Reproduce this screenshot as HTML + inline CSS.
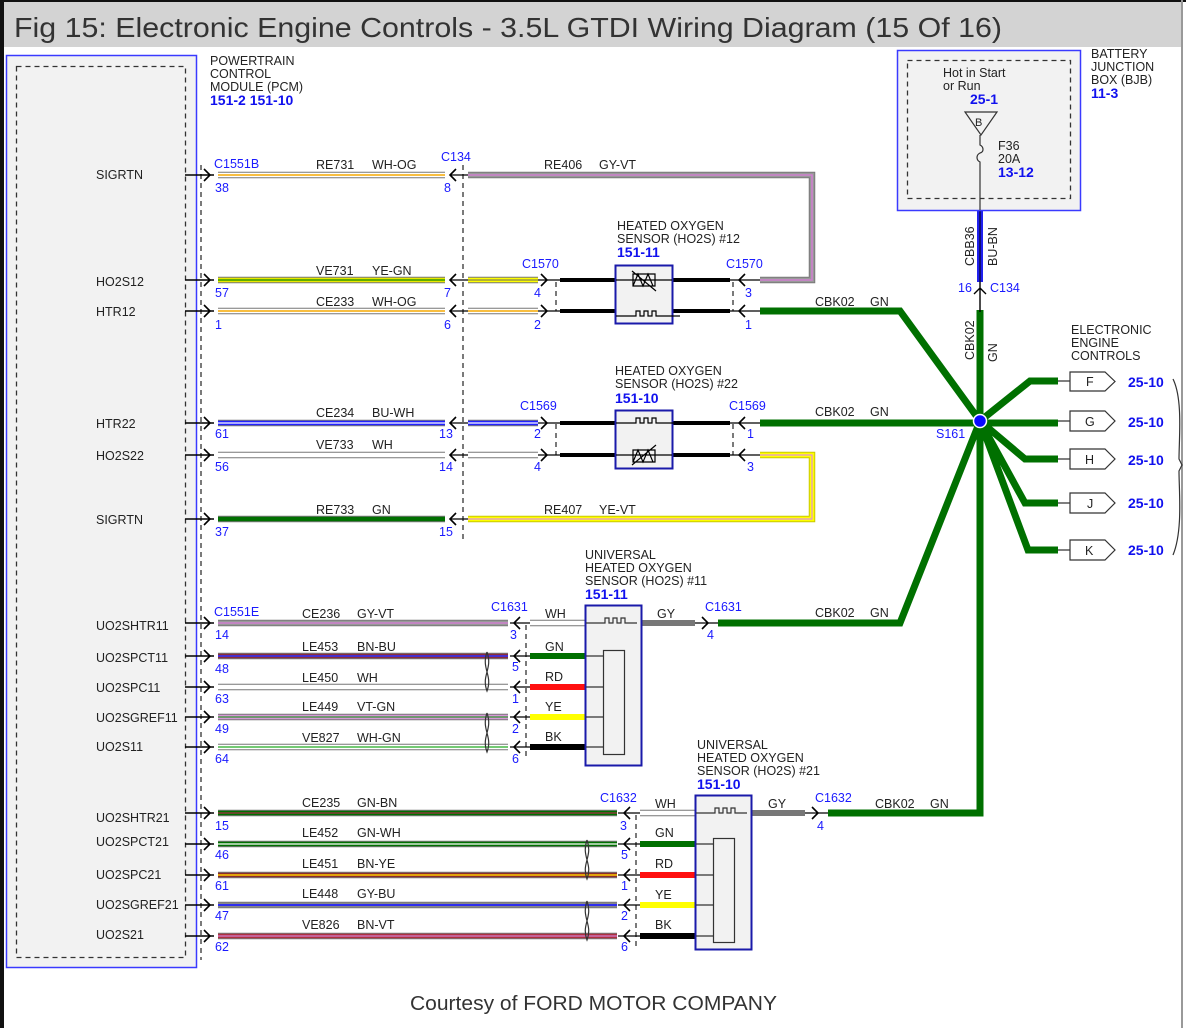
<!DOCTYPE html>
<html><head><meta charset="utf-8"><style>
html,body{margin:0;padding:0;background:#fff}
svg{display:block}
path,polyline,line{fill:none}
text{font-family:"Liberation Sans",sans-serif;font-size:12.5px;fill:#222}
.b{fill:#1a1aff}
.bb{fill:#1010ee;font-weight:bold;font-size:14px}
.ch{stroke:#000;stroke-width:1.6}
.dash{stroke:#333;stroke-width:1.3;stroke-dasharray:5,4}
.o{stroke:#777;stroke-width:6.5}
.k{stroke:#000;stroke-width:4}
.g{stroke:#007000;stroke-width:7;stroke-linejoin:miter}
</style></head><body>
<svg width="1186" height="1028" viewBox="0 0 1186 1028" xmlns="http://www.w3.org/2000/svg">
<rect x="0" y="0" width="1186" height="1028" fill="#fff"/>
<rect x="2" y="2" width="1180" height="45" fill="#d3d3d3"/>
<rect x="0" y="0" width="4" height="1028" fill="#111"/>
<rect x="0" y="0" width="1186" height="2" fill="#111"/>
<rect x="1181" y="0" width="2" height="1028" fill="#999"/>
<text x="14" y="37" textLength="988" lengthAdjust="spacingAndGlyphs" style="font-size:28px;fill:#333">Fig 15: Electronic Engine Controls - 3.5L GTDI Wiring Diagram (15 Of 16)</text>

<!-- PCM -->
<rect x="6.5" y="55.5" width="190" height="912" fill="#f2f2f2" stroke="#3a3aff" stroke-width="1.5"/>
<rect x="16.5" y="66.5" width="169" height="891" fill="none" class="dash"/>
<text x="210" y="65">POWERTRAIN</text><text x="210" y="78">CONTROL</text><text x="210" y="91">MODULE (PCM)</text>
<text x="210" y="105" class="bb">151-2  151-10</text>
<g>
<text x="96" y="179">SIGRTN</text><text x="96" y="286">HO2S12</text><text x="96" y="316">HTR12</text>
<text x="96" y="428">HTR22</text><text x="96" y="460">HO2S22</text><text x="96" y="524">SIGRTN</text>
<text x="96" y="630">UO2SHTR11</text><text x="96" y="662">UO2SPCT11</text><text x="96" y="692">UO2SPC11</text>
<text x="96" y="722">UO2SGREF11</text><text x="96" y="751">UO2S11</text>
<text x="96" y="822">UO2SHTR21</text><text x="96" y="846">UO2SPCT21</text><text x="96" y="879">UO2SPC21</text>
<text x="96" y="909">UO2SGREF21</text><text x="96" y="939">UO2S21</text>
</g>
<!-- dashed connectors -->
<line x1="201" y1="165" x2="201" y2="960" class="dash"/>
<line x1="463" y1="165" x2="463" y2="540" class="dash"/>
<line x1="556" y1="282" x2="556" y2="311" class="dash"/>
<line x1="733" y1="282" x2="733" y2="311" class="dash"/>
<line x1="556" y1="424" x2="556" y2="455" class="dash"/>
<line x1="733" y1="424" x2="733" y2="455" class="dash"/>
<line x1="526" y1="625" x2="526" y2="760" class="dash"/>
<line x1="636" y1="815" x2="636" y2="950" class="dash"/>

<!-- left stubs and chevrons -->
<g stroke="#000" stroke-width="1.4">
<path d="M185 175H214M185 280H214M185 311H214M185 423H214M185 455H214M185 519H214M185 623H214M185 656H214M185 687H214M185 717H214M185 747H214M185 813H214M185 844H214M185 875H214M185 905H214M185 936H214"/>
</g>
<g class="ch">
<path d="M204 169l6 6-6 6M204 274l6 6-6 6M204 305l6 6-6 6M204 417l6 6-6 6M204 449l6 6-6 6M204 513l6 6-6 6M204 617l6 6-6 6M204 650l6 6-6 6M204 681l6 6-6 6M204 711l6 6-6 6M204 741l6 6-6 6M204 807l6 6-6 6M204 838l6 6-6 6M204 869l6 6-6 6M204 899l6 6-6 6M204 930l6 6-6 6"/>
<path d="M456 169l-6 6 6 6M456 274l-6 6 6 6M456 305l-6 6 6 6M456 417l-6 6 6 6M456 449l-6 6 6 6M456 513l-6 6 6 6"/>
<path d="M541 274l6 6-6 6M541 305l6 6-6 6M541 417l6 6-6 6M541 449l6 6-6 6"/>
<path d="M745 274l-6 6 6 6M745 305l-6 6 6 6M745 417l-6 6 6 6M745 449l-6 6 6 6"/>
<path d="M520 617l-6 6 6 6M520 650l-6 6 6 6M520 681l-6 6 6 6M520 711l-6 6 6 6M520 741l-6 6 6 6"/>
<path d="M630 807l-6 6 6 6M630 838l-6 6 6 6M630 869l-6 6 6 6M630 899l-6 6 6 6M630 930l-6 6 6 6"/>
<path d="M702 617l6 6-6 6M812 807l6 6-6 6"/>
</g>
<g stroke="#000" stroke-width="1.2">
<path d="M450 175H468M450 280H468M450 311H468M450 423H468M450 455H468M450 519H468M538 280H560M538 311H560M538 423H560M538 455H560M730 280H760M730 311H760M730 423H760M730 455H760M510 623H530M510 656H530M510 687H530M510 717H530M510 747H530M618 813H640M618 844H640M618 875H640M618 905H640M618 936H640M695 623H718M805 813H828"/>
</g>

<!-- wires PCM to C134 -->
<path class="o" d="M218 175H445M218 280H445M218 311H445M218 423H445M218 455H445M218 519H445"/>
<path stroke="#fff" stroke-width="4.5" d="M218 175H445M218 311H445M218 455H445"/>
<path stroke="#f5a800" stroke-width="1.6" d="M218 175H445M218 311H445"/>
<path stroke="#e8e800" stroke-width="4.5" d="M218 280H445"/><path stroke="#339900" stroke-width="1.6" d="M218 280H445"/>
<path stroke="#2222ff" stroke-width="4.5" d="M218 423H445"/><path stroke="#fff" stroke-width="1.2" d="M218 423H445"/>
<path stroke="#007000" stroke-width="4.5" d="M218 519H445"/>

<!-- right of C134 -->
<path class="o" d="M468 175H812V280H760"/><path stroke="#999" stroke-width="4.5" d="M468 175H812V280H760"/><path stroke="#d080d0" stroke-width="1.6" d="M468 175H812V280H760"/>
<path class="o" d="M468 280H538M468 311H538M468 423H538M468 455H538"/>
<path stroke="#ffff00" stroke-width="4.5" d="M468 280H538"/><path stroke="#666" stroke-width="1" d="M468 280H538"/>
<path stroke="#fff" stroke-width="4.5" d="M468 311H538M468 455H538"/><path stroke="#f5a800" stroke-width="1.4" d="M468 311H538"/>
<path stroke="#2222ff" stroke-width="4.5" d="M468 423H538"/><path stroke="#fff" stroke-width="1.2" d="M468 423H538"/>
<path stroke="#c8c800" stroke-width="6.5" d="M468 519H812V455H760"/><path stroke="#ffff00" stroke-width="4.5" d="M468 519H812V455H760"/><path stroke="#e090e0" stroke-width="1.2" d="M468 519H812V455H760"/>
<path class="k" d="M560 280H730M560 311H730M560 423H730M560 455H730"/>

<!-- Sensor 12 -->
<text x="617" y="230">HEATED OXYGEN</text><text x="617" y="243">SENSOR (HO2S) #12</text><text x="617" y="257" class="bb">151-11</text>
<rect x="615.5" y="265.5" width="57" height="58" fill="#f2f2f2" stroke="#1a1aaa" stroke-width="2"/>
<path stroke="#000" stroke-width="1.2" d="M616 280H672M616 316H632h4v-5h4v5h4v-5h4v5h4v-5h4v5h24M633 274h22v12h-22zM633 286l5-12 5 12 5-12 5 12M632 271l24 20"/>
<!-- Sensor 22 -->
<text x="615" y="375">HEATED OXYGEN</text><text x="615" y="388">SENSOR (HO2S) #22</text><text x="615" y="403" class="bb">151-10</text>
<rect x="615.5" y="410.5" width="57" height="58" fill="#f2f2f2" stroke="#1a1aaa" stroke-width="2"/>
<path stroke="#000" stroke-width="1.2" d="M616 455H672M616 423H632h4v-5h4v5h4v-5h4v5h4v-5h4v5h24M633 450h22v12h-22zM633 462l5-12 5 12 5-12 5 12M632 465l24-20"/>

<!-- upper texts -->
<text x="214" y="168" class="b">C1551B</text><text x="215" y="192" class="b">38</text>
<text x="316" y="169">RE731</text><text x="372" y="169">WH-OG</text>
<text x="441" y="161" class="b">C134</text><text x="444" y="192" class="b">8</text>
<text x="544" y="169">RE406</text><text x="599" y="169">GY-VT</text>
<text x="316" y="275">VE731</text><text x="372" y="275">YE-GN</text>
<text x="215" y="297" class="b">57</text><text x="444" y="297" class="b">7</text>
<text x="522" y="268" class="b">C1570</text><text x="534" y="297" class="b">4</text>
<text x="726" y="268" class="b">C1570</text><text x="745" y="297" class="b">3</text>
<text x="316" y="306">CE233</text><text x="372" y="306">WH-OG</text>
<text x="215" y="329" class="b">1</text><text x="444" y="329" class="b">6</text>
<text x="534" y="329" class="b">2</text><text x="745" y="329" class="b">1</text>
<text x="815" y="306">CBK02</text><text x="870" y="306">GN</text>
<text x="316" y="417">CE234</text><text x="372" y="417">BU-WH</text>
<text x="215" y="438" class="b">61</text><text x="439" y="438" class="b">13</text>
<text x="520" y="410" class="b">C1569</text><text x="534" y="438" class="b">2</text>
<text x="729" y="410" class="b">C1569</text><text x="747" y="438" class="b">1</text>
<text x="815" y="416">CBK02</text><text x="870" y="416">GN</text>
<text x="316" y="449">VE733</text><text x="372" y="449">WH</text>
<text x="215" y="471" class="b">56</text><text x="439" y="471" class="b">14</text>
<text x="534" y="471" class="b">4</text><text x="747" y="471" class="b">3</text>
<text x="316" y="514">RE733</text><text x="372" y="514">GN</text>
<text x="544" y="514">RE407</text><text x="599" y="514">YE-VT</text>
<text x="215" y="536" class="b">37</text><text x="439" y="536" class="b">15</text>
<text x="936" y="438" class="b">S161</text>

<!-- middle group -->
<path class="o" d="M218 623H508M218 656H508M218 687H508M218 717H508M218 747H508"/>
<path stroke="#999" stroke-width="4.5" d="M218 623H508"/><path stroke="#d080d0" stroke-width="1.6" d="M218 623H508"/>
<path stroke="#8b2c3a" stroke-width="4.5" d="M218 656H508"/><path stroke="#3030ff" stroke-width="1.6" d="M218 656H508"/>
<path stroke="#fff" stroke-width="4.5" d="M218 687H508"/>
<path stroke="#d898d8" stroke-width="4.5" d="M218 717H508"/><path stroke="#339933" stroke-width="1.2" d="M218 717H508"/>
<path stroke="#fff" stroke-width="4.5" d="M218 747H508"/><path stroke="#22aa22" stroke-width="1.2" d="M218 747H508"/>
<path stroke="#333" stroke-width="1.2" d="M487 652c-6 17 6 23 0 39c-6-16 6-22 0-39M487 713c-6 17 6 23 0 39c-6-16 6-22 0-39"/>
<path class="o" d="M530 623H585"/><path stroke="#fff" stroke-width="4.5" d="M530 623H585"/>
<path stroke="#007000" stroke-width="6" d="M530 656H585"/><path stroke="#ff1010" stroke-width="6" d="M530 687H585"/>
<path stroke="#ffff00" stroke-width="6" d="M530 717H585"/><path stroke="#000" stroke-width="6" d="M530 747H585"/>
<path stroke="#777" stroke-width="6" d="M641 623H695"/>
<text x="585" y="559">UNIVERSAL</text><text x="585" y="572">HEATED OXYGEN</text><text x="585" y="585">SENSOR (HO2S) #11</text><text x="585" y="599" class="bb">151-11</text>
<rect x="585.5" y="605.5" width="56" height="160" fill="#f2f2f2" stroke="#1a1aaa" stroke-width="2"/>
<path stroke="#333" stroke-width="1.2" d="M586 623H600h5v-5h4v5h4v-5h4v5h4v-5h4v5h12M586 656H603M586 687H603M586 717H603M586 747H603"/>
<rect x="603.5" y="650.5" width="21" height="104" fill="#f2f2f2" stroke="#333" stroke-width="1.2"/>
<text x="214" y="616" class="b">C1551E</text><text x="215" y="639" class="b">14</text>
<text x="302" y="618">CE236</text><text x="357" y="618">GY-VT</text>
<text x="491" y="611" class="b">C1631</text><text x="510" y="639" class="b">3</text>
<text x="545" y="618">WH</text><text x="657" y="618">GY</text>
<text x="705" y="611" class="b">C1631</text><text x="707" y="639" class="b">4</text>
<text x="815" y="617">CBK02</text><text x="870" y="617">GN</text>
<text x="302" y="651">LE453</text><text x="357" y="651">BN-BU</text><text x="215" y="673" class="b">48</text><text x="512" y="671" class="b">5</text><text x="545" y="651">GN</text>
<text x="302" y="682">LE450</text><text x="357" y="682">WH</text><text x="215" y="703" class="b">63</text><text x="512" y="703" class="b">1</text><text x="545" y="681">RD</text>
<text x="302" y="711">LE449</text><text x="357" y="711">VT-GN</text><text x="215" y="733" class="b">49</text><text x="512" y="733" class="b">2</text><text x="545" y="711">YE</text>
<text x="302" y="742">VE827</text><text x="357" y="742">WH-GN</text><text x="215" y="763" class="b">64</text><text x="512" y="763" class="b">6</text><text x="545" y="741">BK</text>

<!-- lower group -->
<path class="o" d="M218 813H617M218 844H617M218 875H617M218 905H617M218 936H617"/>
<path stroke="#007000" stroke-width="4.5" d="M218 813H617"/><path stroke="#8b3a3a" stroke-width="1.6" d="M218 813H617"/>
<path stroke="#007000" stroke-width="4.5" d="M218 844H617"/><path stroke="#fff" stroke-width="1.2" d="M218 844H617"/>
<path stroke="#8b2c2c" stroke-width="4.5" d="M218 875H617"/><path stroke="#ffcc00" stroke-width="1.6" d="M218 875H617"/>
<path stroke="#888" stroke-width="4.5" d="M218 905H617"/><path stroke="#2222ff" stroke-width="1.8" d="M218 905H617"/>
<path stroke="#b03040" stroke-width="4.5" d="M218 936H617"/><path stroke="#d080d0" stroke-width="1.2" d="M218 936H617"/>
<path stroke="#333" stroke-width="1.2" d="M587 840c-6 17 6 23 0 39c-6-16 6-22 0-39M587 901c-6 17 6 23 0 39c-6-16 6-22 0-39"/>
<path class="o" d="M640 813H695"/><path stroke="#fff" stroke-width="4.5" d="M640 813H695"/>
<path stroke="#007000" stroke-width="6" d="M640 844H695"/><path stroke="#ff1010" stroke-width="6" d="M640 875H695"/>
<path stroke="#ffff00" stroke-width="6" d="M640 905H695"/><path stroke="#000" stroke-width="6" d="M640 936H695"/>
<path stroke="#777" stroke-width="6" d="M751 813H805"/>
<text x="697" y="749">UNIVERSAL</text><text x="697" y="762">HEATED OXYGEN</text><text x="697" y="775">SENSOR (HO2S) #21</text><text x="697" y="789" class="bb">151-10</text>
<rect x="695.5" y="795.5" width="56" height="154" fill="#f2f2f2" stroke="#1a1aaa" stroke-width="2"/>
<path stroke="#333" stroke-width="1.2" d="M696 813H710h5v-5h4v5h4v-5h4v5h4v-5h4v5h12M696 844H713M696 875H713M696 905H713M696 936H713"/>
<rect x="713.5" y="838.5" width="21" height="104" fill="#f2f2f2" stroke="#333" stroke-width="1.2"/>
<text x="302" y="807">CE235</text><text x="357" y="807">GN-BN</text><text x="215" y="830" class="b">15</text>
<text x="600" y="802" class="b">C1632</text><text x="620" y="830" class="b">3</text>
<text x="655" y="808">WH</text><text x="768" y="808">GY</text>
<text x="815" y="802" class="b">C1632</text><text x="817" y="830" class="b">4</text>
<text x="875" y="808">CBK02</text><text x="930" y="808">GN</text>
<text x="302" y="837">LE452</text><text x="357" y="837">GN-WH</text><text x="215" y="859" class="b">46</text><text x="621" y="859" class="b">5</text><text x="655" y="837">GN</text>
<text x="302" y="868">LE451</text><text x="357" y="868">BN-YE</text><text x="215" y="890" class="b">61</text><text x="621" y="890" class="b">1</text><text x="655" y="868">RD</text>
<text x="302" y="898">LE448</text><text x="357" y="898">GY-BU</text><text x="215" y="920" class="b">47</text><text x="621" y="920" class="b">2</text><text x="655" y="899">YE</text>
<text x="302" y="929">VE826</text><text x="357" y="929">BN-VT</text><text x="215" y="951" class="b">62</text><text x="621" y="951" class="b">6</text><text x="655" y="929">BK</text>

<!-- green harness -->
<path class="g" d="M760 311H900L980 421M760 423H1058M718 623H900L980 421M828 813H980V310"/>
<path class="g" d="M980 421L1030 381H1058M980 421L1025 459H1058M980 421L1025 503H1058M980 421L1028 550H1058"/>
<circle cx="980" cy="421" r="6.5" fill="#0a0aff" stroke="#fff" stroke-width="1.5"/>
<path stroke="#000" stroke-width="1.4" d="M980 282V312M974 294l6-6 6 6"/>
<path stroke="#333" stroke-width="1.2" d="M1058 381H1070M1058 421H1070M1058 459H1070M1058 503H1070M1058 550H1070"/>
<g fill="#f2f2f2" stroke="#333" stroke-width="1.2">
<path d="M1070 372h35l10 9.5-10 9.5h-35z"/><path d="M1070 411h35l10 10-10 10h-35z"/>
<path d="M1070 449h35l10 10-10 10h-35z"/><path d="M1070 493h35l10 10-10 10h-35z"/>
<path d="M1070 540h35l10 10-10 10h-35z"/>
</g>
<text x="1086" y="386">F</text><text x="1085" y="426">G</text><text x="1085" y="464">H</text><text x="1087" y="508">J</text><text x="1085" y="555">K</text>
<text x="1128" y="387" class="bb">25-10</text><text x="1128" y="427" class="bb">25-10</text><text x="1128" y="465" class="bb">25-10</text><text x="1128" y="508" class="bb">25-10</text><text x="1128" y="555" class="bb">25-10</text>
<path stroke="#333" stroke-width="1.2" d="M1173 379c10 20 6 60 6 80l3 6-3 6c0 20 4 60-6 84"/>
<text x="1071" y="334">ELECTRONIC</text><text x="1071" y="347">ENGINE</text><text x="1071" y="360">CONTROLS</text>
<text transform="translate(974,360) rotate(-90)">CBK02</text>
<text transform="translate(997,362) rotate(-90)">GN</text>

<!-- BJB -->
<path stroke="#2020ee" stroke-width="6" d="M980 210V282"/><path stroke="#000" stroke-width="1" d="M980 210V282"/>
<rect x="897.5" y="50.5" width="183" height="160" fill="#f2f2f2" stroke="#3a3aff" stroke-width="1.5"/>
<rect x="907.5" y="60.5" width="163" height="138" fill="none" class="dash"/>
<text x="943" y="77">Hot in Start</text><text x="943" y="90">or Run</text>
<text x="970" y="104" class="bb">25-1</text>
<path d="M965 112h32l-16 23z" fill="#f2f2f2" stroke="#333" stroke-width="1.2"/>
<text x="975" y="126" style="font-size:11px">B</text>
<path stroke="#333" stroke-width="1.2" d="M980 135V145c4 2 4 7 0 8c-4 2-4 7 0 9V210"/>
<text x="998" y="150">F36</text><text x="998" y="163">20A</text><text x="998" y="177" class="bb">13-12</text>
<text x="1091" y="58">BATTERY</text><text x="1091" y="71">JUNCTION</text><text x="1091" y="84">BOX (BJB)</text>
<text x="1091" y="98" class="bb">11-3</text>
<text transform="translate(974,266) rotate(-90)">CBB36</text>
<text transform="translate(997,266) rotate(-90)">BU-BN</text>
<text x="958" y="292" class="b">16</text><text x="990" y="292" class="b">C134</text>

<text x="410" y="1010" textLength="367" lengthAdjust="spacingAndGlyphs" style="font-size:20px;fill:#333">Courtesy of FORD MOTOR COMPANY</text>
</svg>
</body></html>
